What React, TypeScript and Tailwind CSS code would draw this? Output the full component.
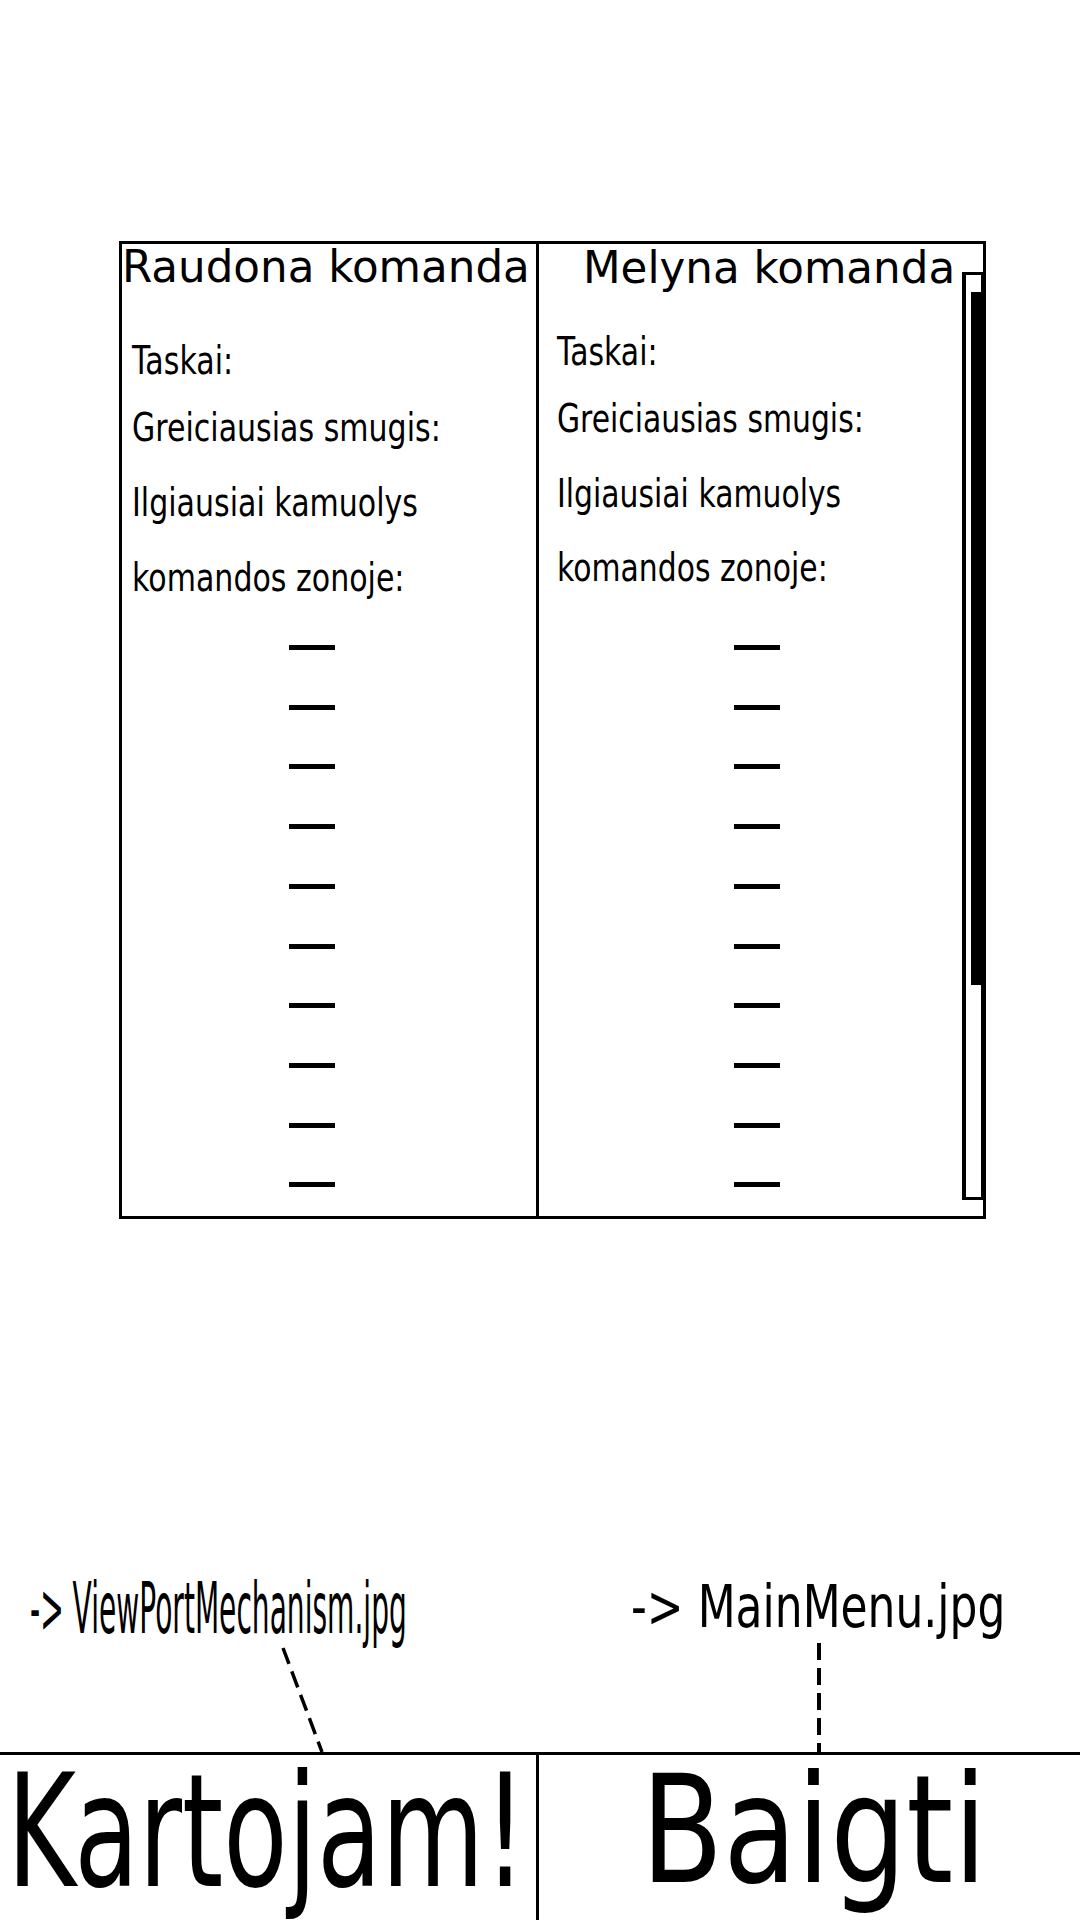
import React from "react";

// ─── SCOREBOARD WIREFRAME ─────────────────────────────────────────────────────

const labels = ["Taskai:", "Greiciausias smugis:", "Ilgiausiai kamuolys", "komandos zonoje:"];

function Dashes({ offset, top }: { offset: string; top: string }) {
  return (
    <div className={`flex flex-col gap-[54.7px] ${offset} ${top}`}>
      {Array.from({ length: 10 }).map((_, i) => (
        <div key={i} className="w-[46px] h-[5px] bg-black" />
      ))}
    </div>
  );
}

export default function App() {
  return (
    <div className="relative w-[1080px] h-[1920px] overflow-hidden bg-white text-black font-['DejaVu_Sans',sans-serif]">
      {/* Rezultatu lentele */}
      <div className="pt-[241px] pl-[119px]">
        <div className="flex w-[867px] h-[978px] border-[3px] border-black">
          {/* Raudona komanda */}
          <div className="w-[417px] border-r-[3px] border-black flex flex-col">
            <div className="mt-[2px] text-[43.6px] leading-none whitespace-nowrap">Raudona komanda</div>
            <div className="mt-[51px] ml-[10px] text-[39px] leading-none whitespace-nowrap origin-left scale-x-[0.77]">{labels[0]}</div>
            <div className="mt-[28px] ml-[10px] text-[39px] leading-none whitespace-nowrap origin-left scale-x-[0.77]">{labels[1]}</div>
            <div className="mt-[36px] ml-[10px] text-[39px] leading-none whitespace-nowrap origin-left scale-x-[0.77]">{labels[2]}</div>
            <div className="mt-[36px] ml-[10px] text-[39px] leading-none whitespace-nowrap origin-left scale-x-[0.77]">{labels[3]}</div>
            <Dashes offset="ml-[167px]" top="mt-[48.5px]" />
          </div>

          {/* Melyna komanda */}
          <div className="flex-1 flex">
            <div className="flex-1 flex flex-col">
              <div className="mt-[3px] ml-[44px] text-[43.6px] leading-none whitespace-nowrap">Melyna komanda</div>
              <div className="mt-[41px] ml-[18px] text-[39px] leading-none whitespace-nowrap origin-left scale-x-[0.765]">{labels[0]}</div>
              <div className="mt-[28px] ml-[18px] text-[39px] leading-none whitespace-nowrap origin-left scale-x-[0.765]">{labels[1]}</div>
              <div className="mt-[36px] ml-[18px] text-[39px] leading-none whitespace-nowrap origin-left scale-x-[0.765]">{labels[2]}</div>
              <div className="mt-[35px] ml-[18px] text-[39px] leading-none whitespace-nowrap origin-left scale-x-[0.765]">{labels[3]}</div>
              <Dashes offset="ml-[195px]" top="mt-[58.5px]" />
            </div>
            {/* scrollbar */}
            <div className="w-[21px] pt-[28px]">
              <div className="h-[928px] border-l-[4px] border-t-[3px] border-b-[3px] border-r-[2px] border-black pl-[5px] pt-[17px]">
                <div className="w-[10px] h-[693px] bg-black" />
              </div>
            </div>
          </div>
        </div>
      </div>

      {/* Nuorodos */}
      <div className="relative h-[533px] grid grid-cols-[539px_1fr]">
        <div className="pt-[353px]">
          <div className="ml-[30px] text-[72px] leading-none whitespace-nowrap origin-left scale-x-[0.39]">-&gt; ViewPortMechanism.jpg</div>
        </div>
        <div className="pt-[359px]">
          <div className="ml-[92px] text-[58px] leading-none whitespace-nowrap origin-left scale-x-[0.758]">-&gt; MainMenu.jpg</div>
        </div>
        <svg className="absolute inset-0 w-full h-full" viewBox="0 0 1080 533" fill="none">
          <line x1="283" y1="429" x2="322" y2="533" stroke="black" strokeWidth="3.5" strokeDasharray="17 8" />
          <line x1="819" y1="424" x2="819" y2="533" stroke="black" strokeWidth="4" strokeDasharray="17 8" />
        </svg>
      </div>

      {/* Mygtukai */}
      <div className="h-[168px] border-t-[3px] border-black grid grid-cols-[539px_1fr]">
        <div className="border-r-[3px] border-black">
          <div className="-mt-[1px] ml-[6.5px] text-[156px] leading-none whitespace-nowrap origin-left scale-x-[0.675]">Kartojam!</div>
        </div>
        <div>
          <div className="ml-[102px] text-[150px] leading-none whitespace-nowrap origin-left scale-x-[0.8]">Baigti</div>
        </div>
      </div>
    </div>
  );
}
